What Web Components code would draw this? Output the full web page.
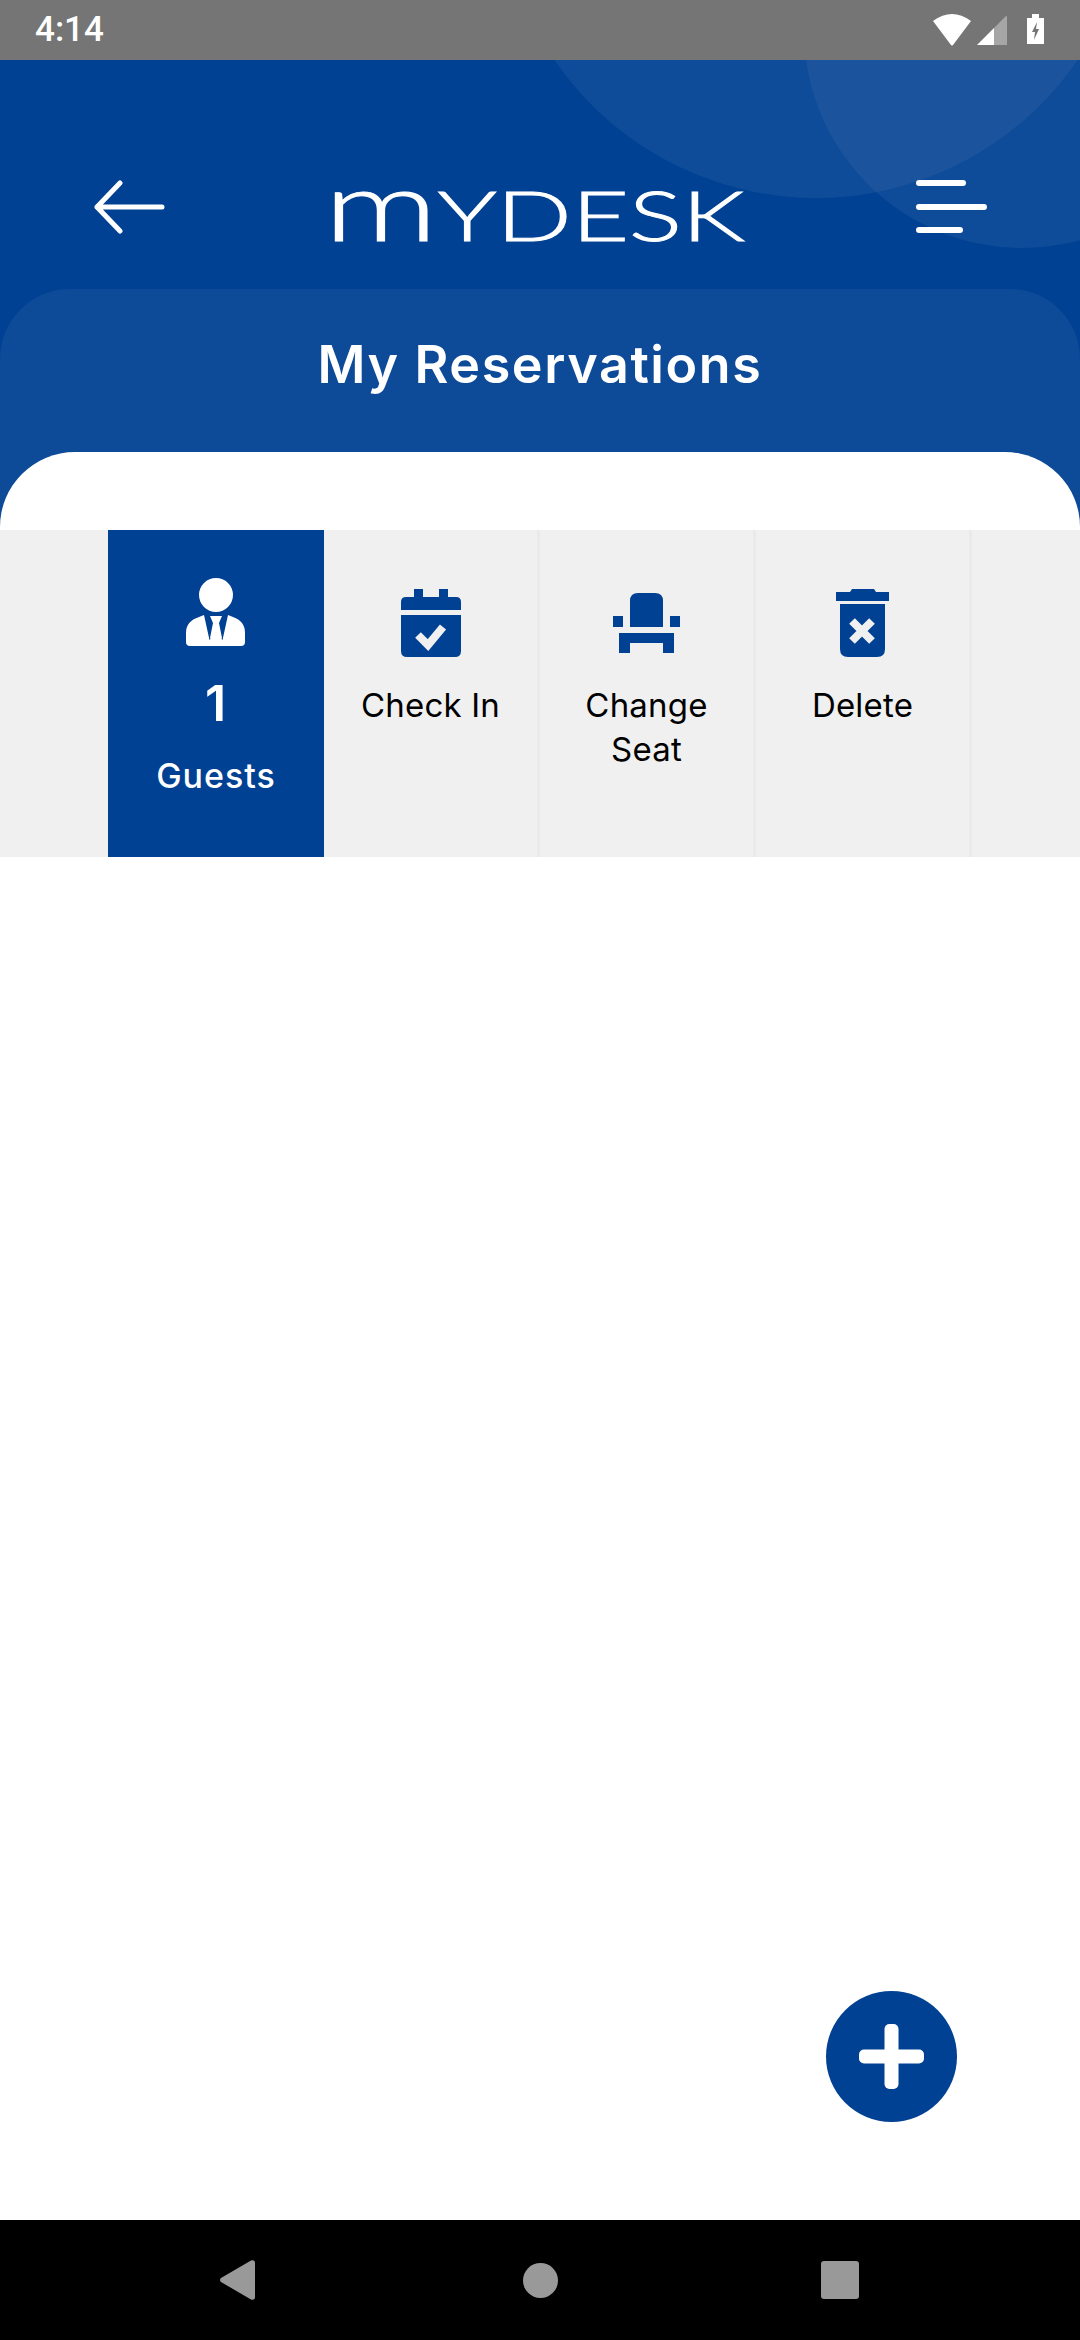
<!DOCTYPE html>
<html>
<head>
<meta charset="utf-8">
<style>
  html, body { margin: 0; padding: 0; background: #fff; }
  body { width: 1080px; height: 2340px; display: flex; flex-direction: column; font-family: Inter, "Noto Sans", sans-serif; }
  svg { display: block; }
</style>
</head>
<body>
<status-bar time="4:14"></status-bar>

<app-header heading="My Reservations">
  <svg slot="start" width="72" height="54" viewBox="0 0 72 54" fill="none" stroke="#fff" stroke-width="5" stroke-linecap="round" stroke-linejoin="round">
    <path d="M26 3 L3 27 L26 51 M3 27 H68"/>
  </svg>
  <app-logo slot="logo"></app-logo>
  <svg slot="end" width="72" height="54" viewBox="0 0 72 54" fill="#fff">
    <rect x="0" y="0" width="50" height="6" rx="3"/>
    <rect x="0" y="24" width="71" height="6" rx="3"/>
    <rect x="0" y="47" width="47" height="6" rx="3"/>
  </svg>
</app-header>

<action-strip>
  <action-tile active count="1" label="Guests">
    <svg width="60" height="68" viewBox="0 0 60 68">
      <circle cx="30" cy="17" r="17" fill="#fff"/>
      <path d="M4 68 Q0 68 0 64 V55 Q0 43 13 39 L18 37 H42 L47 39 Q59 43 59 55 V64 Q59 68 55 68 Z" fill="#fff"/>
      <path d="M18 37 H42 L36.500 62 L30 55 L23.500 62 Z" fill="#004193"/>
      <path d="M24 38 H36 L33 45 L36 60 L30 67 L24 60 L27 45 Z" fill="#fff"/>
    </svg>
  </action-tile>
  <action-tile label="Check In">
    <svg width="60" height="68" viewBox="0 0 60 68" fill="#004193">
      <rect x="13" y="0" width="9" height="12"/>
      <rect x="38" y="0" width="9" height="12"/>
      <path d="M0 21 V13 Q0 8 5 8 H55 Q60 8 60 13 V21 Z"/>
      <path d="M0 26 H60 V62 Q60 68 54 68 H6 Q0 68 0 62 Z"/>
      <path d="M17 46 L27 56 L42 38" fill="none" stroke="#f0f0f0" stroke-width="8"/>
    </svg>
  </action-tile>
  <action-tile label="Change Seat">
    <svg width="68" height="68" viewBox="0 0 68 68" fill="#004193">
      <path d="M17 38 V12 Q17 4 25 4 H42 Q50 4 50 12 V38 Z"/>
      <rect x="0" y="27" width="10" height="11"/>
      <rect x="57" y="27" width="10" height="11"/>
      <path d="M6 44 H61 V64 H50 V54 H17 V64 H6 Z"/>
    </svg>
  </action-tile>
  <action-tile label="Delete">
    <svg width="54" height="68" viewBox="0 0 54 68" fill="#004193">
      <path d="M0 3 H14 L16 0 H38 L40 3 H53 V12 H0 Z"/>
      <path d="M4 15 H49 V60 Q49 68 41 68 H12 Q4 68 4 60 Z"/>
      <path d="M16 32 L36 52 M36 32 L16 52" fill="none" stroke="#f0f0f0" stroke-width="8"/>
    </svg>
  </action-tile>
</action-strip>

<page-body>
  <fab-button></fab-button>
</page-body>

<nav-bar></nav-bar>

<script>
class StatusBar extends HTMLElement {
  connectedCallback() {
    const root = this.attachShadow({ mode: "open" });
    root.innerHTML = `
      <style>
        :host { display: flex; flex: none; height: 60px; background: #757575; align-items: center; justify-content: space-between; padding: 0 36px 0 35px; color: #fff; font: 500 35px Roboto, sans-serif; }
        .icons { display: flex; align-items: flex-start; }
        svg { display: block; }
        span { line-height: 60px; }
      </style>
      <span>${this.getAttribute("time")}</span>
      <div class="icons">
        <svg width="38" height="32" viewBox="0 0 38 32" fill="#fff" style="margin-right:6px"><path d="M0 7 Q19 -7 38 7 L20 31 Q19 32 18 31 Z"/></svg>
        <svg width="30" height="30" viewBox="0 0 30 30" style="margin:2px 20px 0 0"><path d="M0 29 L17 12 V29 Z" fill="#fff"/><path d="M17 12 L29 0 Q30 0 30 1 V29 H17 Z" fill="#a6a6a6"/></svg>
        <svg width="17" height="30" viewBox="0 0 17 30"><path d="M5 0 H12 V4 H17 V30 H0 V4 H5 Z" fill="#fff"/><path d="M10 8 L5 18 H8 L7 26 L12 15 H9 Z" fill="#757575"/></svg>
      </div>`;
  }
}

class AppLogo extends HTMLElement {
  connectedCallback() {
    const root = this.attachShadow({ mode: "open" });
    root.innerHTML = `
      <style>
        :host { display: block; width: 411px; height: 49px; color: #fff; }
        .t { display: inline-block; font: 300 68px/49px Lato, sans-serif; white-space: nowrap; transform-origin: 0 50%; transform: translateY(7px) scaleX(1.455); -webkit-text-stroke: 1px #fff; }
        .m { font-size: 97px; line-height: 0; }
        .y { text-transform: uppercase; }
      </style>
      <span class="t"><span class="m">m</span><span class="y">y</span>DESK</span>`;
  }
}

class AppHeader extends HTMLElement {
  connectedCallback() {
    const root = this.attachShadow({ mode: "open" });
    root.innerHTML = `
      <style>
        :host { display: block; flex: none; position: relative; height: 470px; background: #004193; overflow: hidden; }
        .c { position: absolute; border-radius: 50%; background: rgba(255,255,255,.055); }
        .c1 { left: 499px; top: -496px; width: 634px; height: 634px; }
        .c2 { left: 804px; top: -248px; width: 436px; height: 436px; }
        .row { position: relative; display: flex; justify-content: space-between; align-items: center; height: 54px; padding: 120px 92px 55px 94px; }
        .logo { margin-right: 23px; }
        .panel { position: relative; height: 241px; display: flex; flex-direction: column; border-radius: 70px 70px 0 0; background: rgba(255,255,255,.05); }
        h1 { margin: 0; height: 163px; text-align: center; color: #fff; font: 600 52px/152px Inter, sans-serif; letter-spacing: 1.6px; }
        .sheet { flex: 1; background: #fff; border-radius: 75px 75px 0 0; }
      </style>
      <div class="c c1"></div>
      <div class="c c2"></div>
      <div class="row">
        <slot name="start"></slot>
        <div class="logo"><slot name="logo"></slot></div>
        <slot name="end"></slot>
      </div>
      <div class="panel">
        <h1>${this.getAttribute("heading")}</h1>
        <div class="sheet"></div>
      </div>`;
  }
}

class ActionStrip extends HTMLElement {
  connectedCallback() {
    const root = this.attachShadow({ mode: "open" });
    root.innerHTML = `
      <style>
        :host { display: flex; flex: none; height: 327px; padding-left: 108px; background: #f0f0f0; }
      </style>
      <slot></slot>`;
  }
}

class ActionTile extends HTMLElement {
  connectedCallback() {
    const root = this.attachShadow({ mode: "open" });
    const count = this.getAttribute("count");
    root.innerHTML = `
      <style>
        :host { display: flex; flex-direction: column; align-items: center; box-sizing: border-box; width: 216px; padding-top: 59px; border-right: 3px solid #eaeaea; color: #000; text-align: center; font: 400 33px/44px Inter, sans-serif; letter-spacing: 0.2px; }
        :host([active]) { padding-top: 48px; background: #004193; border-right: 0; color: #fff; font-size: 34px; font-weight: 500; letter-spacing: 1px; }
        .count { margin-top: 27px; font: 600 50px/60px Inter, sans-serif; }
        .label { margin-top: 26px; width: 170px; }
        :host([active]) .label { margin-top: 21px; }
      </style>
      <slot></slot>
      ${count ? `<div class="count">${count}</div>` : ""}
      <div class="label">${this.getAttribute("label")}</div>`;
  }
}

class PageBody extends HTMLElement {
  connectedCallback() {
    const root = this.attachShadow({ mode: "open" });
    root.innerHTML = `
      <style>
        :host { display: block; flex: 1; position: relative; background: #fff; }
      </style>
      <slot></slot>`;
  }
}

class FabButton extends HTMLElement {
  connectedCallback() {
    const root = this.attachShadow({ mode: "open" });
    root.innerHTML = `
      <style>
        :host { display: flex; position: absolute; left: 826px; top: 1134px; width: 131px; height: 131px; border-radius: 50%; background: #004193; align-items: center; justify-content: center; }
      </style>
      <svg width="65" height="65" viewBox="0 0 65 65" fill="#fff">
        <rect x="25.500" y="0" width="14" height="65" rx="5"/>
        <rect x="0" y="25.500" width="65" height="14" rx="5"/>
      </svg>`;
  }
}

class NavBar extends HTMLElement {
  connectedCallback() {
    const root = this.attachShadow({ mode: "open" });
    root.innerHTML = `
      <style>
        :host { display: flex; flex: none; height: 120px; background: #000; align-items: center; padding-left: 220px; }
        svg { display: block; }
      </style>
      <svg width="35" height="40" viewBox="0 0 35 40" fill="#999"><path d="M1 18 L31 0.500 Q35 -0.500 35 3 V37 Q35 40.500 31 39.500 L1 22 Q-1 20 1 18 Z"/></svg>
      <svg width="35" height="35" viewBox="0 0 35 35" fill="#999" style="margin-left:268px"><circle cx="17.500" cy="17.500" r="17.500"/></svg>
      <svg width="38" height="38" viewBox="0 0 38 38" fill="#999" style="margin-left:263px"><rect width="38" height="38" rx="3"/></svg>`;
  }
}

customElements.define("status-bar", StatusBar);
customElements.define("app-logo", AppLogo);
customElements.define("app-header", AppHeader);
customElements.define("action-strip", ActionStrip);
customElements.define("action-tile", ActionTile);
customElements.define("page-body", PageBody);
customElements.define("fab-button", FabButton);
customElements.define("nav-bar", NavBar);
</script>
</body>
</html>
